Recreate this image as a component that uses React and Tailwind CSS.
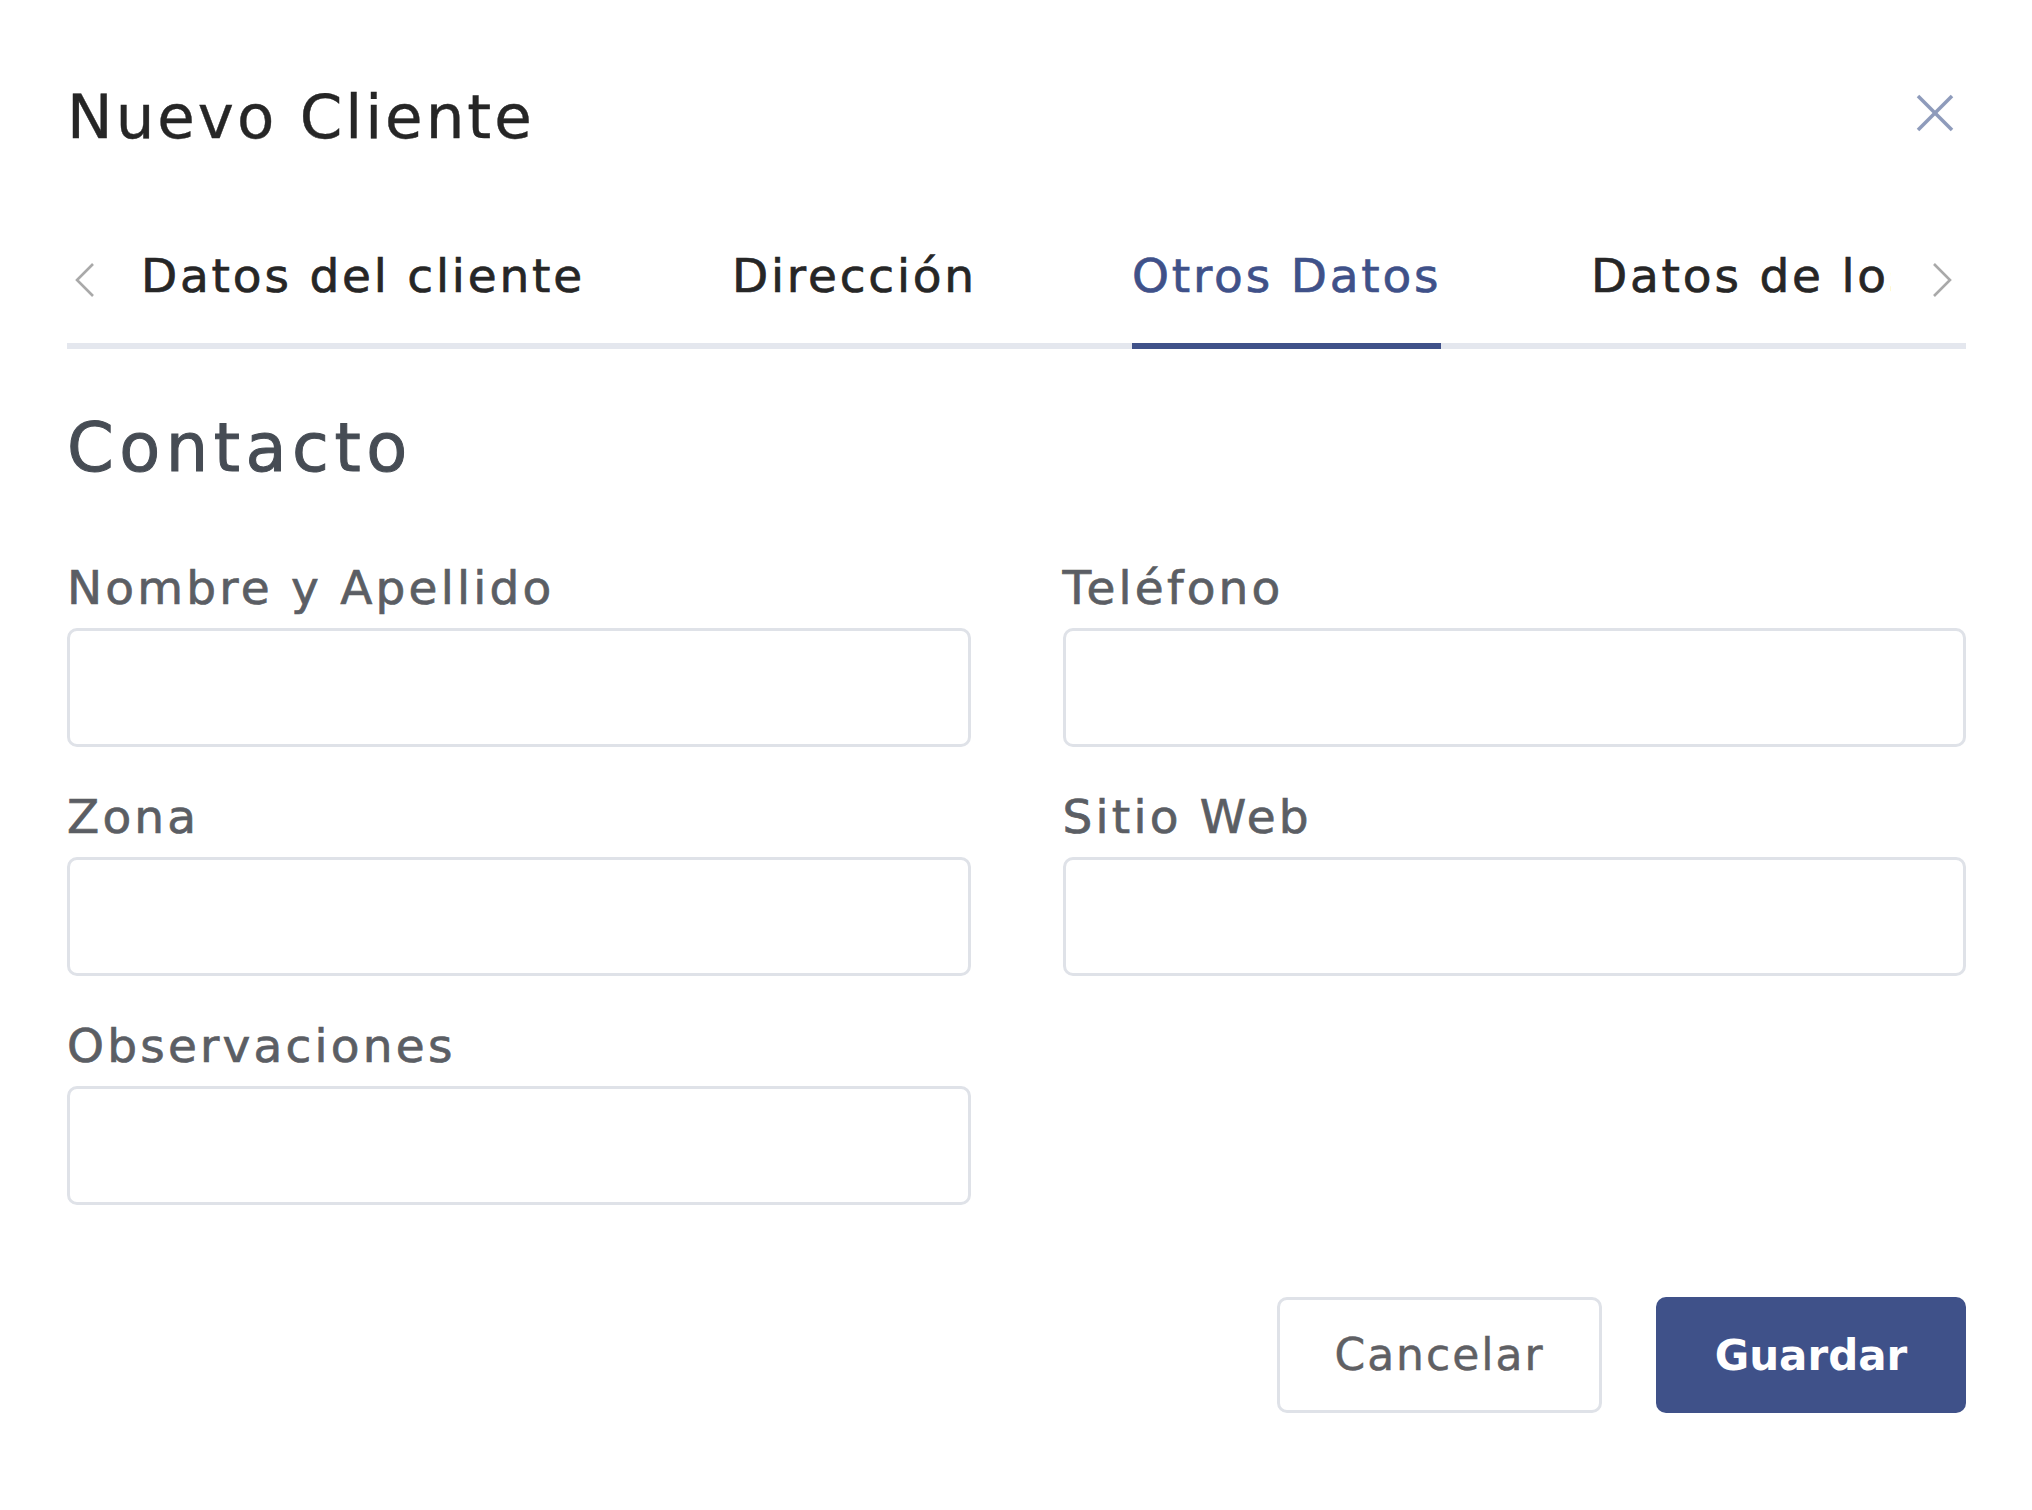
import React from "react";

const font = { fontFamily: '"DejaVu Sans", "Liberation Sans", sans-serif' };

function ChevronLeft() {
  return (
    <svg width="20" height="34" viewBox="0 0 20 34" fill="none">
      <polyline points="18,1 2,17 18,33" stroke="#a9a9a9" strokeWidth="2.6" />
    </svg>
  );
}

function ChevronRight() {
  return (
    <svg width="20" height="34" viewBox="0 0 20 34" fill="none">
      <polyline points="2,1 18,17 2,33" stroke="#a9a9a9" strokeWidth="2.6" />
    </svg>
  );
}

function CloseIcon() {
  return (
    <svg width="38" height="38" viewBox="0 0 38 38" fill="none">
      <line x1="2" y1="2" x2="36" y2="36" stroke="#8e9bbb" strokeWidth="3.6" />
      <line x1="36" y1="2" x2="2" y2="36" stroke="#8e9bbb" strokeWidth="3.6" />
    </svg>
  );
}

function Field({ label }) {
  return (
    <div className="flex flex-col">
      <label className="text-[47px] leading-none tracking-[3.2px] text-[#5b5e64] mb-[17px] whitespace-nowrap [-webkit-text-stroke:0.7px]">
        {label}
      </label>
      <div className="h-[119px] rounded-[10px] border-[3px] border-[#dfe2e8] bg-white" />
    </div>
  );
}

function Tab({ label, w, active }) {
  return (
    <div
      className={
        "whitespace-nowrap text-[47px] leading-none tracking-[2.8px] pb-[44px] border-b-[6px] [-webkit-text-stroke:0.7px] " +
        w +
        (active ? " text-[#3f5189] border-[#3f5189] text-center" : " text-[#262626] border-[#e4e7ee] text-left")
      }
    >
      {label}
    </div>
  );
}

function Spacer({ w }) {
  return <div className={"shrink-0 self-stretch border-b-[6px] border-[#e4e7ee] " + w} />;
}

export default function App() {
  return (
    <div className="min-h-[1510px] w-full bg-white pl-[67px] pr-[66px] pt-[86px]" style={font}>
      <div className="flex items-start justify-between">
        <h1 className="text-[61px] leading-none tracking-[3px] text-[#262626] font-normal [-webkit-text-stroke:0.4px]">
          Nuevo Cliente
        </h1>
        <button className="mt-[8px] mr-[12px]">
          <CloseIcon />
        </button>
      </div>

      <div className="mt-[105px] flex items-stretch">
        <div className="w-[74px] shrink-0 pl-[8px] pt-[11px] border-b-[6px] border-[#e4e7ee]">
          <ChevronLeft />
        </div>
        <div className="min-w-0 flex-1 flex items-end">
          <Tab label="Datos del cliente" w="w-[442px] shrink-0" />
          <Spacer w="w-[149px]" />
          <Tab label="Dirección" w="w-[247px] shrink-0" />
          <Spacer w="w-[153px]" />
          <Tab label="Otros Datos" w="w-[309px] shrink-0" active />
          <Spacer w="w-[150px]" />
          <Tab label="Datos de los contactos" w="min-w-0 flex-1 overflow-hidden" />
        </div>
        <div className="w-[75px] shrink-0 pl-[41px] pt-[11px] border-b-[6px] border-[#e4e7ee]">
          <ChevronRight />
        </div>
      </div>

      <h2 className="mt-[66px] text-[67px] leading-none tracking-[5.5px] text-[#464c54] font-normal [-webkit-text-stroke:1px]">
        Contacto
      </h2>

      <div className="mt-[82px] grid grid-cols-2 gap-x-[92px] gap-y-[46px]">
        <Field label="Nombre y Apellido" />
        <Field label="Teléfono" />
        <Field label="Zona" />
        <Field label="Sitio Web" />
        <Field label="Observaciones" />
      </div>

      <div className="mt-[92px] flex justify-end gap-[54px]">
        <button className="h-[116px] w-[325px] rounded-[10px] border-[3px] border-[#dfe2e8] bg-white text-[44px] tracking-[2px] text-[#5f6064] [-webkit-text-stroke:0.5px]">
          Cancelar
        </button>
        <button className="h-[116px] w-[310px] rounded-[10px] bg-[#3f5189] text-[42px] font-bold text-white">
          Guardar
        </button>
      </div>
    </div>
  );
}
